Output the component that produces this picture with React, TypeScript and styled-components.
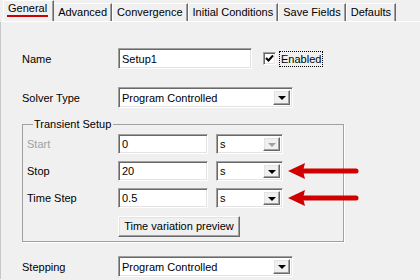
import React from 'react';
import styled, { createGlobalStyle, css } from 'styled-components';

const GlobalStyle = createGlobalStyle`
  html, body {
    margin: 0;
    padding: 0;
    background: #f0f0f0;
  }
  body {
    width: 420px;
    height: 280px;
    overflow: hidden;
    font-family: 'Liberation Sans', Arial, sans-serif;
    font-size: 11px;
    color: #000;
  }
`;

const sunken = css`
  box-sizing: border-box;
  border: 1px solid;
  border-color: #a0a0a0 #ffffff #ffffff #a0a0a0;
  box-shadow: inset 1px 1px 0 #696969, inset -1px -1px 0 #e3e3e3;
  background: #fff;
`;

const raised = css`
  box-sizing: border-box;
  border: 1px solid;
  border-color: #ffffff #696969 #696969 #ffffff;
  box-shadow: inset -1px -1px 0 #a0a0a0, inset 1px 1px 0 #e3e3e3;
  background: #f0f0f0;
`;

const TabStrip = styled.div`
  display: flex;
  align-items: flex-end;
  height: 21px;
  padding-left: 5px;
`;

const Tab = styled.div<{ $active?: boolean }>`
  position: relative;
  box-sizing: border-box;
  height: 18px;
  padding: 2px 3px 0 3px;
  border-top: 1px solid #fff;
  border-left: 1px solid #fff;
  border-right: 1px solid #696969;
  box-shadow: inset -1px 0 0 #a0a0a0;
  white-space: nowrap;
  line-height: 13px;

  ${({ $active }) =>
    $active &&
    css`
      height: 21px;
      margin: 0 -1px 0 -2px;
      padding: 1px 5px 0 3px;
      z-index: 1;
      background: #f0f0f0;
    `}
`;

const TabText = styled.span<{ $active?: boolean }>`
  display: inline-block;
  padding: 0 1px;
  ${({ $active }) =>
    $active &&
    css`
      border-bottom: 2px solid #cc0000;
      line-height: 13px;
    `}
`;

const Panel = styled.div`
  border-top: 1px solid #fff;
  border-left: 1px solid #c8c8c8;
  height: 258px;
  padding: 26px 0 0 21px;
  box-sizing: border-box;
`;

const Row = styled.div<{ $mt?: number }>`
  display: flex;
  align-items: center;
  height: 21px;
  margin-top: ${({ $mt }) => $mt ?? 0}px;

  & > * {
    flex: none;
  }
`;

const Label = styled.div<{ $w?: number; $disabled?: boolean }>`
  width: ${({ $w }) => $w ?? 96}px;
  color: ${({ $disabled }) => ($disabled ? '#a0a0a0' : '#000')};
`;

const TextBox = styled.div<{ $w: number; $h?: number }>`
  ${sunken};
  width: ${({ $w }) => $w}px;
  height: ${({ $h }) => $h ?? 21}px;
  display: flex;
  align-items: center;
  padding-left: 3px;
`;

const Combo = styled.div<{ $w: number; $h?: number; $ml?: number }>`
  ${sunken};
  width: ${({ $w }) => $w}px;
  height: ${({ $h }) => $h ?? 21}px;
  margin-left: ${({ $ml }) => $ml ?? 0}px;
  display: flex;
  align-items: stretch;
  padding: 2px;
`;

const ComboText = styled.div`
  flex: 1;
  display: flex;
  align-items: center;
  padding-left: 1px;
`;

const DropButton = styled.div<{ $disabled?: boolean }>`
  ${raised};
  width: 17px;
  flex: none;
  display: flex;
  align-items: center;
  justify-content: center;

  &::after {
    content: '';
    border-left: 4px solid transparent;
    border-right: 4px solid transparent;
    border-top: 4px solid ${({ $disabled }) => ($disabled ? '#a0a0a0' : '#000')};
    margin-top: 1px;
  }
`;

const CheckBox = styled.div`
  ${sunken};
  width: 13px;
  height: 13px;
  margin-left: 11px;
  display: flex;
  align-items: center;
  justify-content: center;
`;

const FocusLabel = styled.span`
  margin-left: 4px;
  outline: 1px dotted #000;
  outline-offset: 0;
  padding: 0 1px;
  line-height: 14px;
`;

const Group = styled.fieldset`
  box-sizing: border-box;
  width: 322px;
  min-width: 0;
  margin: 10px 0 0 0;
  padding: 0 0 5px 4px;
  border: 1px solid #a0a0a0;
  box-shadow: 1px 1px 0 #fff;
`;

const Legend = styled.legend`
  margin-left: 6px;
  padding: 0 2px 0 1px;
  line-height: 13px;
`;

const GroupRow = styled(Row)`
  height: 20px;
  margin-top: ${({ $mt }) => $mt ?? 7}px;
`;

const Button = styled.div`
  ${raised};
  width: 122px;
  height: 21px;
  margin-left: 91px;
  display: flex;
  align-items: center;
  justify-content: center;
`;

const Arrow = styled.svg`
  margin-left: 5px;
`;

const Check = () => (
  <svg width="9" height="9" viewBox="0 0 9 9">
    <path d="M1 4 L3.5 6.5 L8 1.5" stroke="#000" strokeWidth="2" fill="none" />
  </svg>
);

const RedArrow = () => (
  <Arrow width="72" height="18" viewBox="0 0 72 18">
    <polygon points="0,9 17,1 15,9 17,17" fill="#d00000" />
    <line x1="12" y1="9" x2="68" y2="9" stroke="#d00000" strokeWidth="5" strokeLinecap="round" />
  </Arrow>
);

const tabs = ['General', 'Advanced', 'Convergence', 'Initial Conditions', 'Save Fields', 'Defaults'];

const units = [
  { label: 'Start', value: '0', disabled: true },
  { label: 'Stop', value: '20', arrow: true },
  { label: 'Time Step', value: '0.5', arrow: true },
];

const App = () => (
  <>
    <GlobalStyle />
    <TabStrip>
      {tabs.map((t, i) => (
        <Tab key={t} $active={i === 0}>
          <TabText $active={i === 0}>{t}</TabText>
        </Tab>
      ))}
    </TabStrip>
    <Panel>
      <Row>
        <Label>Name</Label>
        <TextBox $w={134}>Setup1</TextBox>
        <CheckBox>
          <Check />
        </CheckBox>
        <FocusLabel>Enabled</FocusLabel>
      </Row>
      <Row $mt={18}>
        <Label>Solver Type</Label>
        <Combo $w={175}>
          <ComboText>Program Controlled</ComboText>
          <DropButton />
        </Combo>
      </Row>
      <Group>
        <Legend>Transient Setup</Legend>
        {units.map((u, i) => (
          <GroupRow key={u.label} $mt={i === 0 ? 3 : 7}>
            <Label $w={91} $disabled={u.disabled}>
              {u.label}
            </Label>
            <TextBox $w={90} $h={20}>
              {u.value}
            </TextBox>
            <Combo $w={67} $h={20} $ml={8}>
              <ComboText>s</ComboText>
              <DropButton $disabled={u.disabled} />
            </Combo>
            {u.arrow && <RedArrow />}
          </GroupRow>
        ))}
        <GroupRow $mt={8}>
          <Button>Time variation preview</Button>
        </GroupRow>
      </Group>
      <Row $mt={14}>
        <Label>Stepping</Label>
        <Combo $w={175}>
          <ComboText>Program Controlled</ComboText>
          <DropButton />
        </Combo>
      </Row>
    </Panel>
  </>
);

export default App;
